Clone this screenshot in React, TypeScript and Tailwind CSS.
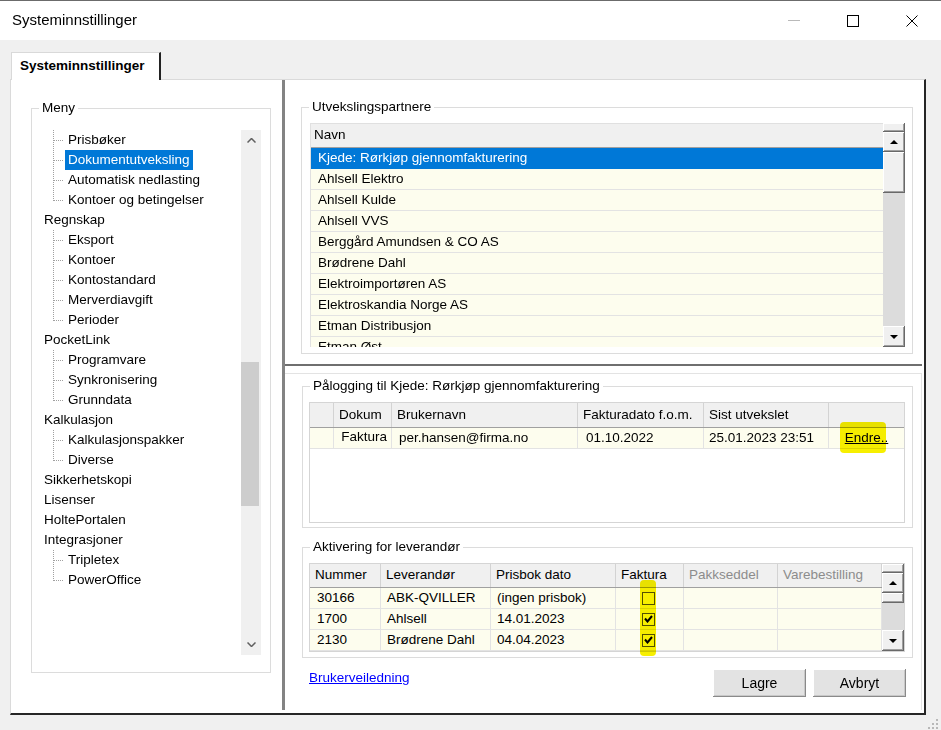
import React from "react"

const FONT = "font-['Liberation_Sans',Arial,sans-serif]"
// classic win32 3D face used by the old-style grid scrollbars
const RAISED =
  "bg-[#f0f0f0] shadow-[inset_-1px_-1px_0_#696969,inset_1px_1px_0_#ffffff,inset_-2px_-2px_0_#a0a0a0]"

type TreeNode = { label: string; child?: boolean; last?: boolean; selected?: boolean }

const tree: TreeNode[] = [
  { label: "Prisbøker", child: true },
  { label: "Dokumentutveksling", child: true, selected: true },
  { label: "Automatisk nedlasting", child: true },
  { label: "Kontoer og betingelser", child: true, last: true },
  { label: "Regnskap" },
  { label: "Eksport", child: true },
  { label: "Kontoer", child: true },
  { label: "Kontostandard", child: true },
  { label: "Merverdiavgift", child: true },
  { label: "Perioder", child: true, last: true },
  { label: "PocketLink" },
  { label: "Programvare", child: true },
  { label: "Synkronisering", child: true },
  { label: "Grunndata", child: true, last: true },
  { label: "Kalkulasjon" },
  { label: "Kalkulasjonspakker", child: true },
  { label: "Diverse", child: true, last: true },
  { label: "Sikkerhetskopi" },
  { label: "Lisenser" },
  { label: "HoltePortalen" },
  { label: "Integrasjoner" },
  { label: "Tripletex", child: true },
  { label: "PowerOffice", child: true, last: true },
]

const partners = [
  "Kjede: Rørkjøp gjennomfakturering",
  "Ahlsell Elektro",
  "Ahlsell Kulde",
  "Ahlsell VVS",
  "Berggård Amundsen & CO AS",
  "Brødrene Dahl",
  "Elektroimportøren AS",
  "Elektroskandia Norge AS",
  "Etman Distribusjon",
  "Etman Øst",
]

const suppliers = [
  { nr: "30166", name: "ABK-QVILLER", date: "(ingen prisbok)", faktura: false },
  { nr: "1700", name: "Ahlsell", date: "14.01.2023", faktura: true },
  { nr: "2130", name: "Brødrene Dahl", date: "04.04.2023", faktura: true },
]

function TitleBar() {
  return (
    <div className="h-[39px] shrink-0 bg-white flex items-center">
      <span className="flex-1 pl-[12px] text-[15px]">Systeminnstillinger</span>
      <div className="flex h-full">
        <div className="w-[58px] flex items-center justify-center">
          <div className="w-[12px] h-[1px] bg-[#b9b9b9]" />
        </div>
        <div className="w-[59px] flex items-center justify-center">
          <div className="w-[12px] h-[12px] border border-black" />
        </div>
        <div className="w-[59px] flex items-center justify-center">
          <svg width="12" height="12" viewBox="0 0 12 12">
            <path d="M0.5 0.5 L11.5 11.5 M11.5 0.5 L0.5 11.5" stroke="#000" strokeWidth="1" />
          </svg>
        </div>
      </div>
    </div>
  )
}

// group box: the legend sits on the border, inner padding lives on a wrapper so the legend stays put
function GroupBox({
  label,
  className,
  inner,
  children,
}: {
  label: string
  className: string
  inner: string
  children: React.ReactNode
}) {
  return (
    <fieldset className={`border border-[#dcdcdc] shrink-0 ${className}`}>
      <legend className="ml-[7px] px-[3px] text-[13.5px] leading-[16px]">{label}</legend>
      <div className={inner}>{children}</div>
    </fieldset>
  )
}

function Tri({ down }: { down?: boolean }) {
  return (
    <svg width="8" height="4" viewBox="0 0 8 4">
      <polygon points={down ? "0,0 8,0 4,4" : "0,4 8,4 4,0"} fill="#000" />
    </svg>
  )
}

function ClassicScrollbar({ thumb }: { thumb: string }) {
  return (
    <div className="w-[22px] shrink-0 flex flex-col bg-[#dcdcdc]">
      <div className={`h-[9px] shrink-0 ${RAISED}`} />
      <div className={`h-[20px] shrink-0 flex items-center justify-center ${RAISED}`}>
        <Tri />
      </div>
      <div className={`shrink-0 ${thumb} ${RAISED}`} />
      <div className="flex-1" />
      <div className={`h-[21px] shrink-0 flex items-center justify-center ${RAISED}`}>
        <Tri down />
      </div>
    </div>
  )
}

function Chevron({ down }: { down?: boolean }) {
  return (
    <svg width="9" height="5" viewBox="0 0 9 5">
      <polyline
        points={down ? "0.5,0.5 4.5,4.5 8.5,0.5" : "0.5,4.5 4.5,0.5 8.5,4.5"}
        fill="none"
        stroke="#606060"
        strokeWidth="1.5"
      />
    </svg>
  )
}

function TreeRow({ node }: { node: TreeNode }) {
  return (
    <div className="h-[20px] flex items-center whitespace-nowrap">
      {node.child && (
        <svg width="24" height="20" className="shrink-0" shapeRendering="crispEdges">
          <line x1="12.5" y1="0" x2="12.5" y2={node.last ? 11 : 20} stroke="#a0a0a0" strokeDasharray="1 1" />
          <line x1="13" y1="10.5" x2="23" y2="10.5" stroke="#a0a0a0" strokeDasharray="1 1" />
        </svg>
      )}
      <span
        className={`h-[20px] px-[3px] leading-[20px] text-[13.5px] ${
          node.selected ? "bg-[#0078d7] text-white" : ""
        }`}
      >
        {node.label}
      </span>
    </div>
  )
}

function LeftPane() {
  return (
    <div className="w-[271px] shrink-0 pt-[20px] pl-[20px]">
      <GroupBox label="Meny" className="w-[240px] h-[573px]" inner="pl-[9px]">
        <div className="mt-[14px] h-[525px] flex">
          <div className="w-[200px] overflow-hidden">
            {tree.map((n) => (
              <TreeRow key={n.label} node={n} />
            ))}
          </div>
          <div className="w-[20px] bg-[#f0f0f0] flex flex-col">
            <div className="h-[21px] flex items-center justify-center">
              <Chevron />
            </div>
            <div className="flex-1 flex flex-col">
              <div className="h-[211px]" />
              <div className="h-[144px] mr-[2px] bg-[#cdcdcd]" />
            </div>
            <div className="h-[21px] flex items-center justify-center">
              <Chevron down />
            </div>
          </div>
        </div>
      </GroupBox>
    </div>
  )
}

function Check({ checked }: { checked: boolean }) {
  return (
    <div className="w-[13px] h-[13px] border border-[#555] bg-white flex items-center justify-center">
      {checked && (
        <svg width="9" height="8" viewBox="0 0 9 8">
          <polyline points="1,3.5 3.5,6.5 8,1" fill="none" stroke="#000" strokeWidth="2" />
        </svg>
      )}
    </div>
  )
}

function PartnerList() {
  return (
    <div className="mt-[8px] w-[595px] h-[224px] flex">
      <div className="flex-1 flex flex-col overflow-hidden border-l border-t border-[#e0e0e0]">
        <div className="h-[24px] shrink-0 bg-[#f0f0f0] border-b border-[#a0a0a0] flex items-center pl-[3px] text-[13.5px]">
          Navn
        </div>
        {partners.map((p, i) => (
          <div
            key={p}
            className={`h-[21px] shrink-0 flex items-center pl-[7px] text-[13.5px] whitespace-nowrap border-b ${
              i === 0 ? "bg-[#0078d7] text-white border-[#0078d7]" : "bg-[#fdfdee] border-[#e3e3e3]"
            }`}
          >
            {p}
          </div>
        ))}
      </div>
      <ClassicScrollbar thumb="h-[41px]" />
    </div>
  )
}

function LoginTable() {
  const head = "h-full flex items-center border-r border-[#d3d3d3] pl-[5px] whitespace-nowrap"
  const cell = "h-full flex items-center border-r border-[#e3e3e3] whitespace-nowrap"
  return (
    <div className="mt-[8px] w-[596px] h-[121px] border border-[#d5d5d5] bg-white relative text-[13.5px]">
      <div className="h-[25px] flex bg-[#f0f0f0] border-b border-[#a0a0a0]">
        <div className={`w-[24px] ${head}`} />
        <div className={`w-[58px] ${head}`}>Dokum</div>
        <div className={`w-[186px] ${head}`}>Brukernavn</div>
        <div className={`w-[126px] ${head}`}>Fakturadato f.o.m.</div>
        <div className={`w-[125px] ${head}`}>Sist utvekslet</div>
        <div className="flex-1" />
      </div>
      <div className="h-[21px] flex bg-[#fdfdee] border-b border-[#e3e3e3]">
        <div className={`w-[24px] ${cell}`} />
        <div className={`w-[58px] justify-end pr-[4px] pb-[2px] ${cell}`}>Faktura</div>
        <div className={`w-[186px] pl-[7px] ${cell}`}>per.hansen@firma.no</div>
        <div className={`w-[126px] pl-[8px] ${cell}`}>01.10.2022</div>
        <div className={`w-[125px] pl-[5px] ${cell}`}>25.01.2023 23:51</div>
        <div className="flex-1 flex items-center justify-center">
          <span className="underline">Endre..</span>
        </div>
      </div>
      {/* yellow marker drawn over the screenshot */}
      <div className="absolute left-[530px] top-[19px] w-[46px] h-[31px] rounded-[4px] bg-[#f7ef00] mix-blend-multiply" />
    </div>
  )
}

function SupplierTable() {
  const head = "h-full flex items-center border-r border-[#d3d3d3] pl-[5px] whitespace-nowrap"
  const cell = "h-full flex items-center border-r border-[#e3e3e3] whitespace-nowrap"
  return (
    <div className="mt-[8px] w-[596px] h-[89px] border border-[#d5d5d5] bg-white flex relative text-[13.5px]">
      <div className="flex-1 flex flex-col">
        <div className="h-[24px] shrink-0 flex bg-[#f0f0f0] border-b border-[#a0a0a0]">
          <div className={`w-[71px] pl-[4px] ${head}`}>Nummer</div>
          <div className={`w-[110px] ${head}`}>Leverandør</div>
          <div className={`w-[125px] ${head}`}>Prisbok dato</div>
          <div className={`w-[68px] ${head}`}>Faktura</div>
          <div className={`w-[94px] text-[#8c8c8c] ${head}`}>Pakkseddel</div>
          <div className={`flex-1 text-[#8c8c8c] ${head}`}>Varebestilling</div>
        </div>
        {suppliers.map((s) => (
          <div key={s.nr} className="h-[21px] shrink-0 flex bg-[#fdfdee] border-b border-[#e3e3e3]">
            <div className={`w-[71px] pl-[7px] ${cell}`}>{s.nr}</div>
            <div className={`w-[110px] pl-[6px] ${cell}`}>{s.name}</div>
            <div className={`w-[125px] pl-[6px] ${cell}`}>{s.date}</div>
            <div className={`w-[68px] pl-[26px] ${cell}`}>
              <Check checked={s.faktura} />
            </div>
            <div className={`w-[94px] ${cell}`} />
            <div className={`flex-1 ${cell}`} />
          </div>
        ))}
      </div>
      <ClassicScrollbar thumb="h-[10px]" />
      <div className="absolute left-[330px] top-[16px] w-[16px] h-[76px] rounded-[4px] bg-[#f7ef00] mix-blend-multiply" />
    </div>
  )
}

function Button({ label }: { label: string }) {
  return (
    <div className="w-[93px] h-[28px] flex items-center justify-center text-[14px] bg-[#e3e3e3] shadow-[inset_-1px_-1px_0_#8a8a8a,inset_1px_1px_0_#ffffff,inset_-2px_-2px_0_#c8c8c8]">
      {label}
    </div>
  )
}

function RightPane() {
  return (
    <div className="flex-1 flex flex-col">
      <div className="h-[284px] shrink-0 pt-[19px] pl-[16px]">
        <GroupBox label="Utvekslingspartnere" className="w-[612px] h-[255px]" inner="pl-[8px]">
          <PartnerList />
        </GroupBox>
      </div>
      <div className="h-[2px] shrink-0 mr-[2px] bg-[#6f6f6f]" />
      <div className="flex-1 mt-[7px] mr-[2px] mb-[3px] border-t border-r border-[#e3e3e3] pt-[4px] pl-[17px] flex flex-col">
        <GroupBox
          label="Pålogging til Kjede: Rørkjøp gjennomfakturering"
          className="w-[611px] h-[150px]"
          inner="pl-[6px]"
        >
          <LoginTable />
        </GroupBox>
        <GroupBox label="Aktivering for leverandør" className="mt-[11px] w-[611px] h-[119px]" inner="pl-[6px]">
          <SupplierTable />
        </GroupBox>
        <div className="mt-[11px] w-[611px] flex items-start justify-between pl-[7px] pr-[7px]">
          <span className="mt-[1px] leading-[16px] text-[13.5px] text-[#0000ff] underline">Brukerveiledning</span>
          <div className="flex gap-[7px]">
            <Button label="Lagre" />
            <Button label="Avbryt" />
          </div>
        </div>
      </div>
    </div>
  )
}

export default function App() {
  return (
    <div className={`w-[941px] h-[730px] bg-[#f0f0f0] border-t border-[#6b6b6b] flex flex-col overflow-hidden text-black ${FONT}`}>
      <TitleBar />
      <div className="flex-1 flex flex-col pt-[12px] pl-[10px]">
        <div className="h-[27px] shrink-0 flex">
          <div className="ml-[1px] w-[150px] h-[28px] relative z-10 bg-white border-l border-t border-r-2 border-l-[#d9d9d9] border-t-[#d9d9d9] border-r-[#222222] pl-[8px] pt-[5px] text-[13.5px] font-bold leading-[16px] whitespace-nowrap">
            Systeminnstillinger
          </div>
        </div>
        <div className="w-[916px] h-[636px] shrink-0 bg-white flex border-t border-l border-r-2 border-b-2 border-t-[#dadada] border-l-[#dadada] border-r-[#262626] border-b-[#262626]">
          <LeftPane />
          <div className="w-[3px] shrink-0 mb-[3px] bg-[#838383]" />
          <RightPane />
        </div>
        <div className="flex-1 flex justify-end items-start pt-[3px] pr-[3px]">
          <svg width="11" height="11" viewBox="0 0 11 11">
            <g fill="#b8b8b8">
              <rect x="9" y="1" width="2" height="2" />
              <rect x="5" y="5" width="2" height="2" />
              <rect x="9" y="5" width="2" height="2" />
              <rect x="1" y="9" width="2" height="2" />
              <rect x="5" y="9" width="2" height="2" />
              <rect x="9" y="9" width="2" height="2" />
            </g>
          </svg>
        </div>
      </div>
    </div>
  )
}
